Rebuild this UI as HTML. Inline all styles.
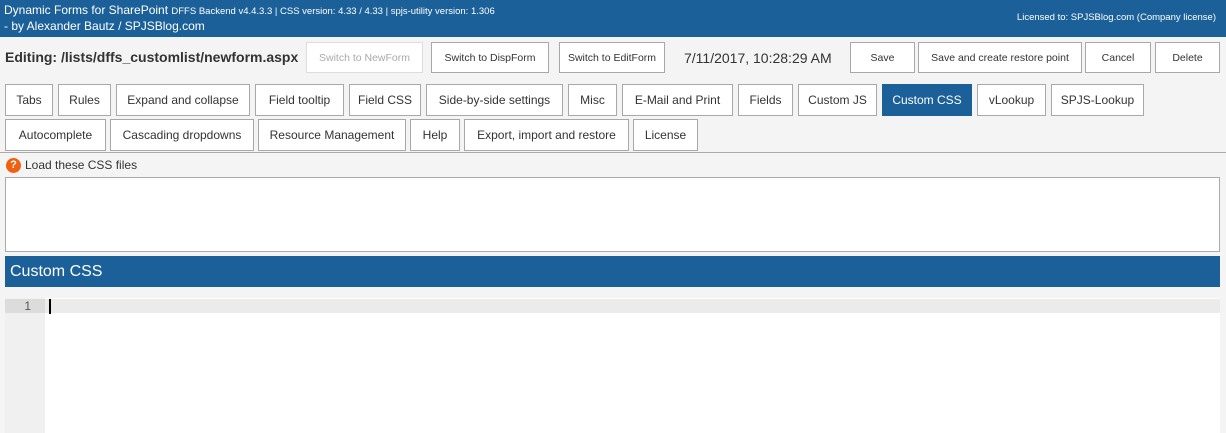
<!DOCTYPE html>
<html><head><style>
body{margin:0;width:1226px;height:433px;overflow:hidden;background:#f4f4f4;font-family:"Liberation Sans",sans-serif;position:relative}
.hd{position:absolute;left:0;top:0;width:1226px;height:37px;background:#1b6098;color:#fff}
.b{position:absolute;box-sizing:border-box;background:#fff;border:1px solid #a8a8a8;font-size:12px;color:#333;display:flex;align-items:center;justify-content:center;white-space:nowrap}
.r1{top:84px;height:32px}.r2{top:119px;height:32px}.t{top:42px;height:31px;font-size:10.5px}
</style></head><body>
<div class="hd">
<div style="position:absolute;left:4px;top:3px;font-size:12px">Dynamic Forms for SharePoint <span style="font-size:9.5px">DFFS Backend v4.4.3.3 | CSS version: 4.33 / 4.33 | spjs-utility version: 1.306</span></div>
<div style="position:absolute;left:4px;top:19px;font-size:12px">- by Alexander Bautz / SPJSBlog.com</div>
<div style="position:absolute;right:10px;top:12px;font-size:9.5px">Licensed to: SPJSBlog.com (Company license)</div>
</div>
<div style="position:absolute;left:5px;top:49px;font-size:14px;font-weight:bold;color:#333">Editing: /lists/dffs_customlist/newform.aspx</div>
<div class="b t" style="left:306px;width:117px;color:#aaa;border-color:#ddd">Switch to NewForm</div>
<div class="b t" style="left:431px;width:118px">Switch to DispForm</div>
<div class="b t" style="left:559px;width:106px">Switch to EditForm</div>
<div style="position:absolute;left:684px;top:50px;font-size:14px;color:#333">7/11/2017, 10:28:29 AM</div>
<div class="b t" style="left:850px;width:65px">Save</div>
<div class="b t" style="left:918px;width:164px">Save and create restore point</div>
<div class="b t" style="left:1085px;width:66px">Cancel</div>
<div class="b t" style="left:1155px;width:65px">Delete</div>
<div class="b r1" style="left:5px;width:48px">Tabs</div>
<div class="b r1" style="left:58px;width:53px">Rules</div>
<div class="b r1" style="left:116px;width:134px">Expand and collapse</div>
<div class="b r1" style="left:255px;width:89px">Field tooltip</div>
<div class="b r1" style="left:349px;width:72px">Field CSS</div>
<div class="b r1" style="left:426px;width:137px">Side-by-side settings</div>
<div class="b r1" style="left:568px;width:49px">Misc</div>
<div class="b r1" style="left:622px;width:111px">E-Mail and Print</div>
<div class="b r1" style="left:738px;width:55px">Fields</div>
<div class="b r1" style="left:798px;width:79px">Custom JS</div>
<div class="b r1" style="left:882px;width:90px;background:#1b6098;color:#fff;border-color:#1b6098">Custom CSS</div>
<div class="b r1" style="left:977px;width:69px">vLookup</div>
<div class="b r1" style="left:1051px;width:93px">SPJS-Lookup</div>
<div class="b r2" style="left:5px;width:101px">Autocomplete</div>
<div class="b r2" style="left:110px;width:144px">Cascading dropdowns</div>
<div class="b r2" style="left:258px;width:148px">Resource Management</div>
<div class="b r2" style="left:410px;width:50px">Help</div>
<div class="b r2" style="left:464px;width:165px">Export, import and restore</div>
<div class="b r2" style="left:633px;width:65px">License</div>
<div style="position:absolute;left:0;top:152px;width:1226px;height:1px;background:#aaa"></div>
<div style="position:absolute;left:6px;top:158px;width:15px;height:15px;border-radius:50%;background:#f06010;color:#fff;font-size:11px;font-weight:bold;text-align:center;line-height:15px">?</div>
<div style="position:absolute;left:25px;top:158px;font-size:12px;color:#333">Load these CSS files</div>
<div style="position:absolute;left:5px;top:177px;width:1215px;height:75px;box-sizing:border-box;background:#fff;border:1px solid #aaa"></div>
<div style="position:absolute;left:5px;top:256px;width:1215px;height:31px;background:#1b6098;color:#fff;font-size:16px;line-height:31px;padding-left:5px;box-sizing:border-box">Custom CSS</div>
<div style="position:absolute;left:5px;top:298px;width:1215px;height:135px;background:#fff"></div>
<div style="position:absolute;left:5px;top:298px;width:40px;height:135px;background:#f0f0f0"></div>
<div style="position:absolute;left:5px;top:299px;width:40px;height:14px;background:#dcdcdc;font-size:12px;color:#555;text-align:right;box-sizing:border-box;padding-right:14px;line-height:14px">1</div>
<div style="position:absolute;left:45px;top:299px;width:1175px;height:14px;background:#ebebeb"></div>
<div style="position:absolute;left:49px;top:299px;width:2px;height:15px;background:#000"></div>
</body></html>
